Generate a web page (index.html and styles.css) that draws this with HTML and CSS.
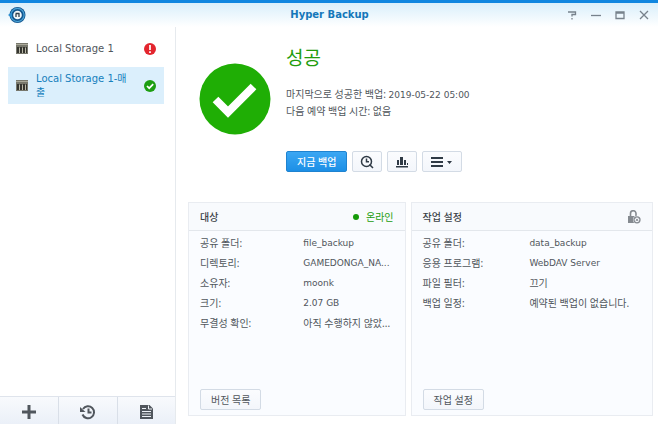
FILE: index.html
```html
<!DOCTYPE html>
<html lang="ko">
<head>
<meta charset="utf-8">
<meta name="viewport" content="width=device-width, initial-scale=1">
<title>Hyper Backup</title>
<link rel="stylesheet" href="styles.css">
</head>
<body>
<div class="window">
  <header class="titlebar">
    <svg class="logo" viewBox="0 0 18 18" aria-hidden="true">
      <circle cx="9.500" cy="9" r="8" fill="#12568f"/>
      <circle cx="9.500" cy="9" r="6.600" fill="none" stroke="#4ba3d6" stroke-width="1.200"/>
      <path d="M0 9 4 6v6z" fill="#2b8fd0"/>
      <circle cx="9.500" cy="9" r="4.300" fill="#f4f8fb"/>
      <path d="M7.500 7.500h4M8 8v3M11 7v4" stroke="#33414d" stroke-width="1.300" fill="none"/>
    </svg>
    <h1>Hyper Backup</h1>
    <div class="controls">
      <button type="button" aria-label="도움말"><svg viewBox="0 0 10 10"><path d="M1 2h7.500v2.500H5V6.500M5 8v1.500" /></svg></button>
      <button type="button" aria-label="최소화"><svg viewBox="0 0 10 10"><path d="M0 5.500h10"/></svg></button>
      <button type="button" aria-label="최대화"><svg viewBox="0 0 10 10"><path d="M1 2h8v6.500H1zM1 3h8"/></svg></button>
      <button type="button" aria-label="닫기"><svg viewBox="0 0 10 10"><path d="m1 1 8 8M9 1 1 9"/></svg></button>
    </div>
  </header>
  <aside class="sidebar">
    <nav class="tasks">
      <a href="#task1" class="task">
        <svg class="nas" viewBox="0 0 12 12" aria-hidden="true"><path fill="#77776c" d="M0 0h12v11H0z"/><path fill="#aaa99a" d="M0 1h12v1H0z"/><path fill="#34342f" d="M1 4h2v6H1zM4 4h2v6H4zM7 4h2v6H7zM10 4h1v6h-1z"/><path fill="#b9b8a7" d="M3 5h1v5H3zM6 5h1v5H6zM9 5h1v5H9z"/></svg>
        <span class="name">Local Storage 1</span>
        <svg class="state" viewBox="0 0 12 12" role="img" aria-label="오류"><circle cx="6" cy="6" r="6" fill="#e3262e"/><path d="M6 2v5M6 8.200v1.800" stroke="#fff" stroke-width="1.700"/></svg>
      </a>
      <a href="#task2" class="task selected">
        <svg class="nas" viewBox="0 0 12 12" aria-hidden="true"><path fill="#77776c" d="M0 0h12v11H0z"/><path fill="#aaa99a" d="M0 1h12v1H0z"/><path fill="#34342f" d="M1 4h2v6H1zM4 4h2v6H4zM7 4h2v6H7zM10 4h1v6h-1z"/><path fill="#b9b8a7" d="M3 5h1v5H3zM6 5h1v5H6zM9 5h1v5H9z"/></svg>
        <span class="name">Local Storage 1-매출</span>
        <svg class="state" viewBox="0 0 12 12" role="img" aria-label="성공"><circle cx="6" cy="6" r="6" fill="#1d9e12"/><path d="m3 6 2.200 2.200L9.200 4.200" fill="none" stroke="#fff" stroke-width="1.700"/></svg>
      </a>
    </nav>
    <div class="tools">
      <button type="button" aria-label="추가"><svg viewBox="0 0 16 16"><path d="M8 1v14M1 8h14" fill="none" stroke="#50565d" stroke-width="3"/></svg></button>
      <button type="button" aria-label="복원"><svg viewBox="0 0 16 16"><path d="M3 5a6 6 0 1 1-.500 5.500M8.500 4.500V8.500h3" fill="none" stroke="#50565d" stroke-width="2"/><path d="M0 3v5h5.500z" fill="#50565d"/></svg></button>
      <button type="button" aria-label="로그"><svg viewBox="0 0 16 16"><path d="M2 1h9.500L15 4.500V15H2z" fill="#50565d"/><path d="M10.500 1.500V5H14M4 4.500h4M4 7.500h9M4 10h9M4 12.500h9" fill="none" stroke="#eef2f8"/></svg></button>
    </div>
  </aside>
  <main>
    <section class="summary">
      <svg class="big-check" viewBox="0 0 72 72" role="img" aria-label="성공"><circle cx="36" cy="36" r="35.500" fill="#1fae05"/><path d="M16.500 36.500 29 49 54.500 23.500" fill="none" stroke="#fff" stroke-width="8"/></svg>
      <div class="details">
        <h2>성공</h2>
        <p>마지막으로 성공한 백업: <time class="latin">2019-05-22 05:00</time></p>
        <p>다음 예약 백업 시간: 없음</p>
        <div class="actions">
          <button type="button" class="btn primary">지금 백업</button>
          <button type="button" class="btn icon" aria-label="백업 탐색기"><svg viewBox="0 0 14 14"><circle cx="6.500" cy="6.500" r="5" fill="none" stroke="#2f3a45" stroke-width="1.500"/><path d="M6.500 3.500v3.300H9M9.500 9.500l3.500 3.500" fill="none" stroke="#2f3a45" stroke-width="1.500"/></svg></button>
          <button type="button" class="btn icon" aria-label="통계"><svg viewBox="0 0 14 14"><path d="M2 5h2v5H2zM5 2h3v8H5zM9 5h2v5H9zM12 8h1v2h-1zM1 11h12v1.500H1z" fill="#2f3a45"/></svg></button>
          <button type="button" class="btn menu" aria-label="메뉴"><svg viewBox="0 0 22 14"><path d="M0 2h12v2H0zM0 6h12v2H0zM0 10h12v2H0zM16 6h5l-2.500 3z" fill="#2f3a45"/></svg></button>
        </div>
      </div>
    </section>
    <div class="panels">
      <section class="panel target">
        <header><h3>대상</h3><span class="online">온라인</span></header>
        <table>
          <tr><th scope="row">공유 폴더:</th><td class="latin">file_backup</td></tr>
          <tr><th scope="row">디렉토리:</th><td class="latin">GAMEDONGA_NA...</td></tr>
          <tr><th scope="row">소유자:</th><td class="latin">moonk</td></tr>
          <tr><th scope="row">크기:</th><td class="latin">2.07 GB</td></tr>
          <tr><th scope="row">무결성 확인:</th><td>아직 수행하지 않았...</td></tr>
        </table>
        <footer><button type="button" class="btn">버전 목록</button></footer>
      </section>
      <section class="panel settings">
        <header><h3>작업 설정</h3>
          <svg class="lock" viewBox="0 0 14 14" role="img" aria-label="암호화 안 됨"><path d="M3.500 7V3.500a2.500 2.500 0 0 1 5.500 0V6" fill="none" stroke="#858a90" stroke-width="1.600"/><path d="M1 6h8v7H1z" fill="#858a90"/><circle cx="10" cy="9.800" r="4" fill="#f7f9fd"/><circle cx="10" cy="9.800" r="3" fill="none" stroke="#858a90" stroke-width="1.300"/><path d="m8.800 8.600 2.400 2.400m0-2.400L8.800 11" stroke="#858a90"/></svg>
        </header>
        <table>
          <tr><th scope="row">공유 폴더:</th><td class="latin">data_backup</td></tr>
          <tr><th scope="row">응용 프로그램:</th><td class="latin">WebDAV Server</td></tr>
          <tr><th scope="row">파일 필터:</th><td>끄기</td></tr>
          <tr><th scope="row">백업 일정:</th><td>예약된 백업이 없습니다.</td></tr>
        </table>
        <footer><button type="button" class="btn">작업 설정</button></footer>
      </section>
    </div>
  </main>
</div>
</body>
</html>
```
FILE: styles.css
```css
* { box-sizing: border-box; }
body {
  margin: 0;
  color: #50565c;
  background: #fff;
  font: 10px/16px "Noto Sans", "Noto Sans CJK KR", sans-serif;
}
h1, h2, h3, p { margin: 0; }
button { font: inherit; color: inherit; cursor: pointer; }
svg { display: block; }
.latin { font-family: "DejaVu Sans", "Noto Sans CJK KR", sans-serif; font-size: 9px; }

.window {
  min-height: 100vh;
  display: grid;
  grid-template: 27px 1fr / 176px 1fr;
}
.titlebar {
  grid-column: 1 / -1;
  display: grid;
  grid-template-columns: 90px 1fr 88px;
  align-items: center;
  padding: 0 9px 0 8px;
  border-top: 3px solid #0f86e0;
  background: linear-gradient(#d9effb, #fff);
}
.logo { width: 18px; height: 18px; }
h1 {
  text-align: center;
  color: #1477ba;
  font: bold 10px/16px "DejaVu Sans", sans-serif;
}
.controls { display: flex; justify-content: flex-end; gap: 14px; }
.controls button { padding: 0; border: 0; background: none; }
.controls svg { width: 10px; height: 10px; fill: none; stroke: #77828c; stroke-width: 1.3; }

.sidebar { display: flex; flex-direction: column; border-right: 1px solid #e6eaee; }
.tasks { flex: 1; padding: 3px 11px 0 8px; }
.task {
  display: grid;
  grid-template-columns: 12px 1fr 12px;
  gap: 8px;
  align-items: center;
  min-height: 37px;
  padding: 0 8px;
  color: #50565c;
  text-decoration: none;
  font: 10px/14px "DejaVu Sans", "Noto Sans CJK KR", sans-serif;
}
.task.selected { background: #dbeffc; color: #1680bd; }
.name { padding-right: 6px; word-break: break-all; }
.nas, .state { width: 12px; height: 12px; }
.tools { display: grid; grid-template-columns: repeat(3, 1fr); height: 28px; border-top: 1px solid #dfe4ec; }
.tools button {
  display: grid;
  place-items: center;
  padding: 2px 0 0;
  border: 0;
  background: linear-gradient(#f8fafd, #ebf0f8);
}
.tools button + button { border-left: 1px solid #d9dfe8; }
.tools svg { width: 16px; height: 16px; }

main { display: flex; flex-direction: column; padding: 18px 5px 8px 12px; }
.summary { display: flex; gap: 15px; padding-left: 11px; }
.big-check { width: 72px; height: 72px; margin-top: 18px; }
h2 { margin-bottom: 15px; color: #219c0c; font-size: 19px; font-weight: 400; line-height: 26px; }
.actions { display: flex; gap: 5px; margin-top: 32px; }
.btn {
  height: 21px;
  padding: 0 10px;
  border: 1px solid #d3dbe5;
  border-radius: 2px;
  background: linear-gradient(#fbfcfe, #f3f6fb);
  line-height: 18px;
}
.btn.primary { border-color: #1f83d0; background: linear-gradient(#3ba7f3, #1c8fe6); color: #fff; font-weight: 500; }
.btn.icon { padding: 0 7px; }
.btn.menu { padding: 0 8px; }
.icon svg { width: 14px; height: 14px; }
.menu svg { width: 22px; height: 14px; }

.panels { flex: 1; display: flex; gap: 5px; margin-top: 30px; }
.panel { display: flex; flex-direction: column; min-width: 0; border: 1px solid #e9ecf1; background: #fafcff; }
.target { flex: 217; }
.settings { flex: 242; }
.panel header {
  display: flex;
  align-items: center;
  justify-content: space-between;
  height: 28px;
  padding: 0 11px;
  border-bottom: 1px solid #e3e7ec;
  background: #f8fafd;
}
h3 { color: #3c4248; font-size: 10px; font-weight: 500; }
.online { display: flex; align-items: center; gap: 7px; color: #219c0c; }
.online::before { content: ""; width: 6px; height: 6px; border-radius: 50%; background: #159a08; }
.lock { width: 14px; height: 14px; }
table { width: 100%; margin-top: 2px; table-layout: fixed; border-collapse: collapse; }
th, td { height: 20px; padding: 0; text-align: left; font-weight: 400; }
th { width: 53%; padding-left: 11px; }
.settings th { width: 49%; }
td { white-space: nowrap; }
.panel footer { margin-top: auto; padding: 0 11px 5px; }
```
